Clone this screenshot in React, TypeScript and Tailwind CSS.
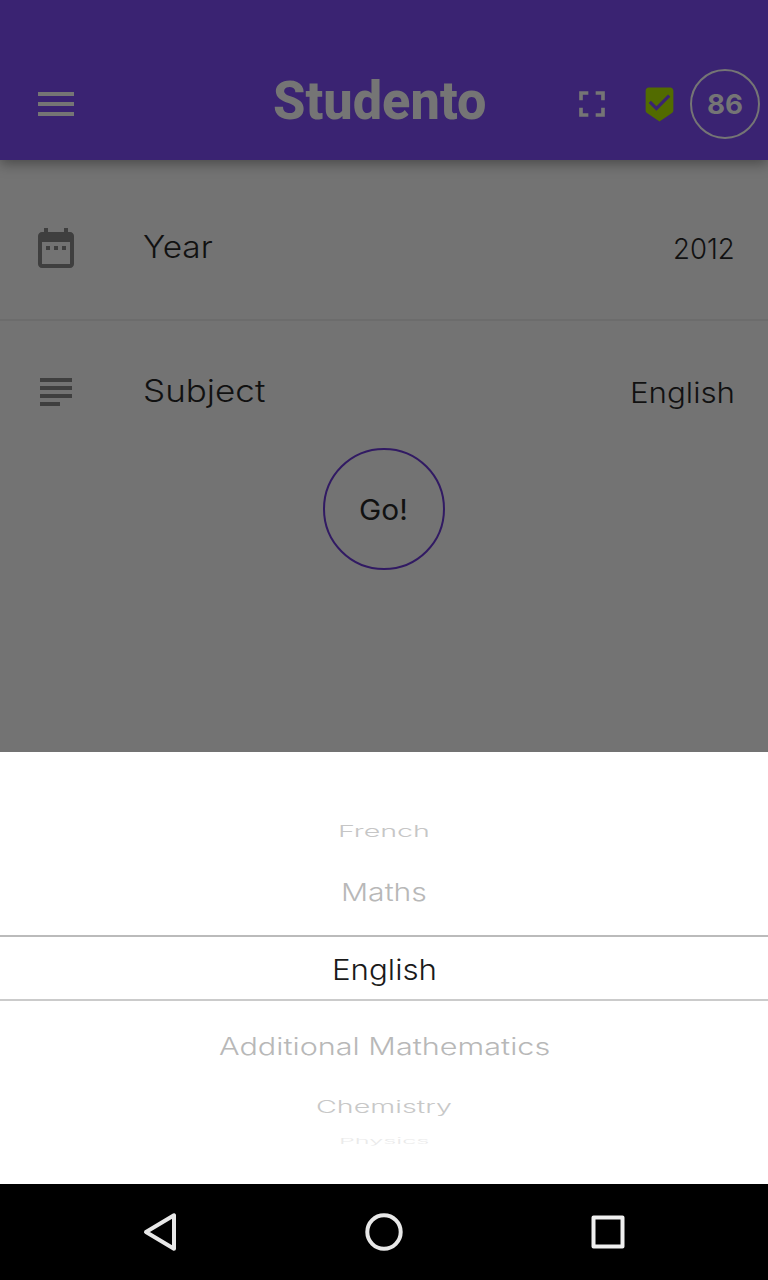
import { useLayoutEffect, useRef, useState } from "react";
import clsx from "clsx";

type LabelProps = {
  text: string;
  width: number;
  scaleY?: number;
  className?: string;
};

// Stretches a single line of text to an exact width; scaleY flattens wheel rows.
function Label({ text, width, scaleY = 1, className }: LabelProps) {
  const ref = useRef<HTMLSpanElement>(null);
  const [scaleX, setScaleX] = useState(1);

  useLayoutEffect(() => {
    const natural = ref.current?.offsetWidth;
    if (natural) setScaleX(width / natural);
  }, [text, width]);

  return (
    <span className={clsx("flex shrink-0 items-center", className)} style={{ width }}>
      <span
        ref={ref}
        className="inline-block shrink-0 origin-left whitespace-nowrap"
        style={{ transform: `scale(${scaleX}, ${scaleY})` }}
      >
        {text}
      </span>
    </span>
  );
}

function Icon({ d, className }: { d: string; className: string }) {
  return (
    <svg viewBox="0 0 24 24" fill="currentColor" className={clsx("shrink-0", className)}>
      <path d={d} />
    </svg>
  );
}

const icons = {
  menu: "M3 18h18v-2H3v2zm0-5h18v-2H3v2zm0-7v2h18V6H3z",
  fullscreen:
    "M7 14H5v5h5v-2H7v-3zm-2-4h2V7h3V5H5v5zm12 7h-3v2h5v-5h-2v3zM14 5v2h3v3h2V5h-5z",
  badge:
    "M19 1H5c-1.1 0-1.99.9-1.99 2L3 15.93c0 .69.35 1.3.88 1.66L12 23l8.11-5.41c.53-.36.88-.97.88-1.66L21 3c0-1.1-.9-2-2-2zm-9 15l-5-5 1.41-1.41L10 13.17l7.59-7.59L19 7l-9 9z",
  calendar:
    "M9 11H7v2h2v-2zm4 0h-2v2h2v-2zm4 0h-2v2h2v-2zm2-7h-1V2h-2v2H8V2H6v2H5c-1.11 0-1.99.9-1.99 2L3 20c0 1.1.89 2 2 2h14c1.1 0 2-.9 2-2V6c0-1.1-.9-2-2-2zm0 16H5V9h14v11z",
  subject: "M4 5h16v2H4zM4 9h16v2H4zM4 13h16v2H4zM4 17h10v2H4z",
};

function Header() {
  return (
    <header className="z-10 flex h-40 shrink-0 items-center bg-[#3a2372] pt-12 pl-8 text-[#757575] shadow-[0_4px_12px_rgba(0,0,0,0.35)]">
      <Icon d={icons.menu} className="size-12" />
      <h1 className="ml-[193px] pb-1.5 font-['Roboto',sans-serif] text-[54px] leading-[64px] font-extrabold">
        <Label text="Studento" width={213} />
      </h1>
      <Icon d={icons.fullscreen} className="ml-[84px] size-11" />
      <Icon d={icons.badge} className="ml-[27px] size-[37px] text-[#526b00]" />
      <div className="ml-3 flex size-[70px] shrink-0 items-center justify-center rounded-full border-2 border-[#757575]">
        <Label text="86" width={36} className="pt-0.5 text-[27px] leading-8 font-bold" />
      </div>
    </header>
  );
}

type RowProps = {
  icon: string;
  name: string;
  nameWidth: number;
  value: string;
  valueWidth: number;
  className?: string;
};

function Row({ icon, name, nameWidth, value, valueWidth, className }: RowProps) {
  return (
    <div className={clsx("flex h-36 shrink-0 items-center pr-[33px] pl-8", className)}>
      <Icon d={icon} className="size-12 text-[#3f3f3f]" />
      <Label
        text={name}
        width={nameWidth}
        className="mb-0.5 ml-[63px] text-[31px] leading-10 font-light"
      />
      <Label
        text={value}
        width={valueWidth}
        className="mt-0.5 ml-auto text-[28px] leading-9 font-light"
      />
    </div>
  );
}

function Picker() {
  return (
    <section className="flex h-[432px] shrink-0 flex-col items-center bg-white pt-[50px] text-[28px] leading-9 font-light">
      <Label text="French" width={92} scaleY={0.58} className="h-[58px] text-[#c6c6c6]" />
      <Label text="Maths" width={86} scaleY={0.87} className="h-[64px] text-[#b8b8b8]" />
      <div className="mt-[11px] flex h-[66px] w-full shrink-0 justify-center border-y-2 border-t-[#bbbbbb] border-b-[#cbcbcb] pt-[3px] text-[#1a1a1a]">
        <Label text="English" width={105} />
      </div>
      <Label
        text="Additional Mathematics"
        width={331}
        scaleY={0.85}
        className="h-[91px] text-[#b8b8b8]"
      />
      <Label text="Chemistry" width={136} scaleY={0.6} className="h-[29px] text-[#c8c8c8]" />
      <Label text="Physics" width={90} scaleY={0.29} className="h-[39px] text-[#eaeaea]" />
    </section>
  );
}

function NavigationBar() {
  return (
    <nav className="flex h-24 shrink-0 items-center justify-between bg-black px-[136px] text-[#e8e8e8]">
      <svg viewBox="0 0 48 48" className="size-12" fill="none" stroke="currentColor" strokeWidth="4" strokeLinejoin="round">
        <path d="M38 7.3v33.4L10 24z" />
      </svg>
      <svg viewBox="0 0 48 48" className="size-12" fill="none" stroke="currentColor" strokeWidth="4">
        <circle cx="24" cy="24" r="16.7" />
      </svg>
      <svg viewBox="0 0 48 48" className="size-12" fill="none" stroke="#f0f0f0" strokeWidth="4" strokeLinejoin="round">
        <rect x="9.5" y="9.5" width="29" height="29" />
      </svg>
    </nav>
  );
}

export default function App() {
  return (
    <div className="flex h-[1280px] w-[768px] flex-col overflow-hidden bg-[#737373] font-['Inter',sans-serif] text-[#111111]">
      <Header />
      <main className="flex h-[592px] shrink-0 flex-col pt-4">
        <Row icon={icons.calendar} name="Year" nameWidth={70} value="2012" valueWidth={62} />
        <div className="z-0 -my-px h-0.5 shrink-0 bg-[#6c6c6c]" />
        <Row icon={icons.subject} name="Subject" nameWidth={122} value="English" valueWidth={105} />
        <button className="-mt-4 flex size-[122px] shrink-0 items-center justify-center self-center rounded-full border-2 border-[#311a63]">
          <Label text="Go!" width={49} className="mr-px pt-0.5 text-[28px] leading-9 font-normal" />
        </button>
      </main>
      <Picker />
      <NavigationBar />
    </div>
  );
}
